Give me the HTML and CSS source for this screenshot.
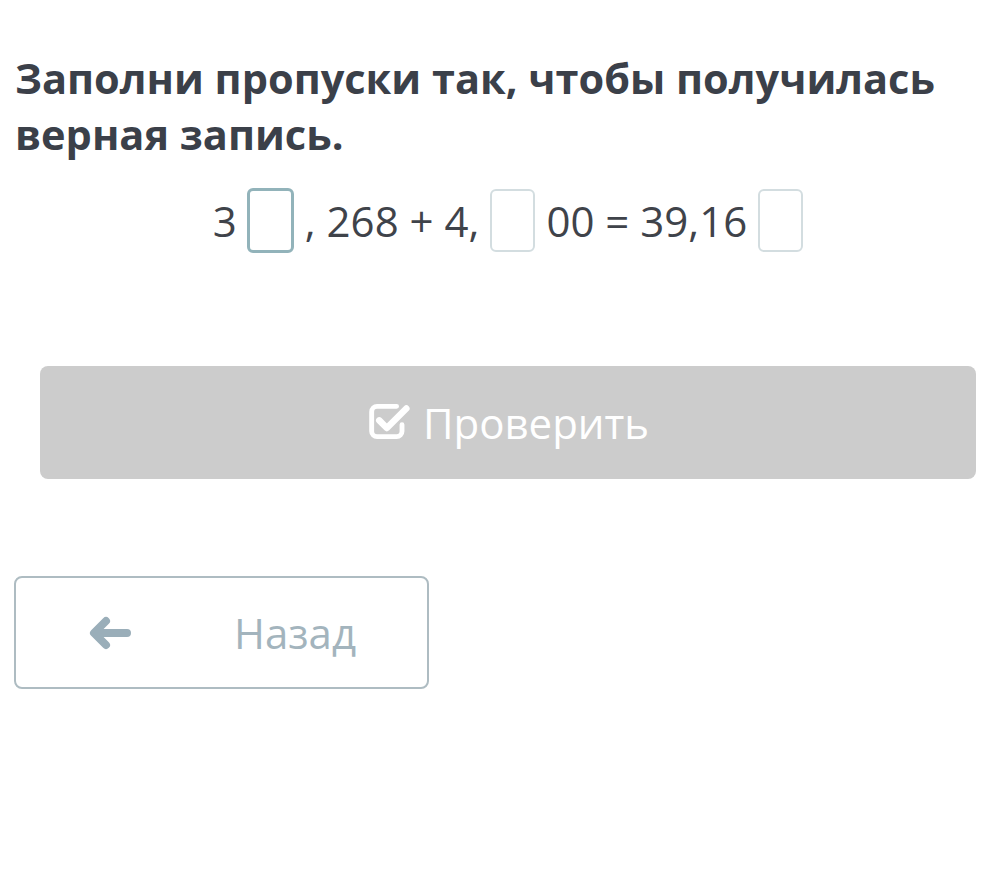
FILE: index.html
```html
<!DOCTYPE html>
<html lang="ru">
<head>
<meta charset="utf-8">
<title>Задание</title>
<link rel="stylesheet" href="styles.css">
</head>
<body>
<main class="page">
  <h1 class="title">Заполни пропуски так, чтобы получилась верная запись.</h1>
  <div class="equation">
    <span class="num">3</span>
    <span class="gap gap-active"></span>
    <span class="num">, 268 + 4,</span>
    <span class="gap"></span>
    <span class="num">00 = 39,16</span>
    <span class="gap"></span>
  </div>
  <div class="check-wrap">
    <button class="check-btn" type="button">
      <svg class="check-icon" viewBox="0 0 40 36" width="44" height="39" aria-hidden="true">
        <path d="M27 4H9a5 5 0 0 0-5 5v18a5 5 0 0 0 5 5h18a5 5 0 0 0 5-5v-6" fill="none" stroke="#fff" stroke-width="4.5" stroke-linecap="round"/>
        <path d="M11 17l7 7L36 6" fill="none" stroke="#fff" stroke-width="6" stroke-linecap="round" stroke-linejoin="round"/>
      </svg>
      <span>Проверить</span>
    </button>
  </div>
  <div class="back-wrap">
    <button class="back-btn" type="button">
      <svg class="back-icon" viewBox="0 0 42 34" width="42" height="34" aria-hidden="true">
        <path d="M17 5L5 17l12 12M6 17h32" fill="none" stroke="#9aaeb9" stroke-width="8" stroke-linecap="round" stroke-linejoin="round"/>
      </svg>
      <span class="back-text">Назад</span>
    </button>
  </div>
</main>
</body>
</html>
```
FILE: styles.css
```css
html, body {
  margin: 0;
  padding: 0;
  background: #ffffff;
}
.page {
  font-family: "Open Sans", "Liberation Sans", sans-serif;
  padding-top: 50px;
}
.title {
  margin: 0 40px 0 15px;
  font-size: 41.5px;
  font-weight: 700;
  line-height: 56px;
  color: #3b4049;
}
.equation {
  display: flex;
  align-items: center;
  justify-content: center;
  margin-top: 25px;
  padding-left: 24px;
  font-size: 42px;
  color: #3f434a;
  height: 66px;
}
.num {
  white-space: pre;
}
.gap {
  display: inline-block;
  box-sizing: border-box;
  width: 45px;
  height: 63px;
  border: 2px solid #d3dde0;
  border-radius: 6px;
  margin: 0 11px;
}
.gap-active {
  width: 47px;
  height: 65px;
  border: 3px solid #92b3ba;
  margin: 0 11px 0 10px;
}
.check-wrap {
  padding: 0 27px 0 40px;
  margin-top: 113px;
}
.check-btn {
  width: 100%;
  height: 113px;
  border: none;
  border-radius: 8px;
  background: #cccccc;
  color: #ffffff;
  font-family: inherit;
  font-size: 42px;
  display: flex;
  align-items: center;
  justify-content: center;
  gap: 12px;
  padding: 0;
}
.check-icon {
  display: block;
  margin-top: -3px;
}
.back-wrap {
  margin-top: 97px;
  padding-left: 14px;
}
.back-btn {
  box-sizing: border-box;
  width: 415px;
  height: 113px;
  border: 2px solid #aebcc2;
  border-radius: 8px;
  background: #ffffff;
  display: flex;
  align-items: center;
  padding: 0 0 0 73px;
  font-family: inherit;
  font-size: 42px;
  color: #a3b4bd;
}
.back-icon {
  display: block;
}
.back-text {
  margin-left: 103px;
}
```
